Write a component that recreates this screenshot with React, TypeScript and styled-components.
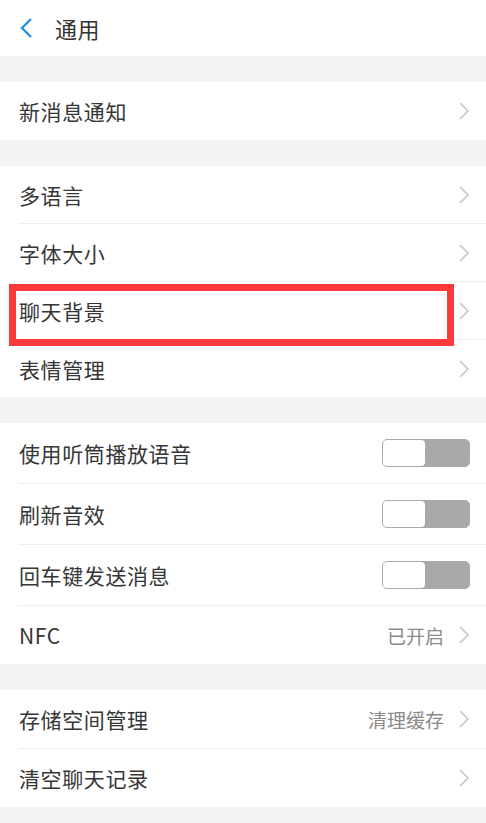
import { FC } from "react";
import styled, { createGlobalStyle } from "styled-components";

const GlobalStyle = createGlobalStyle`
  html, body {
    margin: 0;
    padding: 0;
    background: #f3f3f3;
  }
  body {
    font-family: "Noto Sans CJK SC", "Noto Sans", sans-serif;
    color: #333;
  }
`;

const Page = styled.div`
  width: 486px;
  height: 823px;
  overflow: hidden;
  background: #f3f3f3;
  display: flex;
  flex-direction: column;
`;

const Header = styled.div`
  height: 56px;
  background: #fff;
  display: flex;
  align-items: center;
  padding-left: 19px;
  gap: 20px;
`;

const Title = styled.div`
  font-size: 22px;
  color: #333;
  letter-spacing: 0.5px;
`;

const Group = styled.div`
  background: #fff;
  margin-top: 26px;
`;

const Row = styled.div<{ $h: number; $last?: boolean }>`
  position: relative;
  height: ${(p) => p.$h}px;
  display: flex;
  align-items: center;
  padding: 0 16px 0 19px;
  border-bottom: ${(p) => (p.$last ? "none" : "1px solid transparent")};
  &:after {
    content: "";
    display: ${(p) => (p.$last ? "none" : "block")};
    position: absolute;
    left: 18px;
    right: 0;
    bottom: -1px;
    height: 1px;
    background: #ededed;
  }
`;

const Label = styled.div`
  flex: 1;
  font-size: 21px;
  color: #363636;
  letter-spacing: 0.6px;
`;

const Value = styled.div`
  font-size: 19px;
  color: #8a8a8a;
  margin-right: 14px;
`;

const Toggle = styled.div`
  width: 86px;
  height: 26px;
  border: 1px solid #a9a9a7;
  border-radius: 5px;
  background: #a9aaa8;
  display: flex;
`;

const Knob = styled.div`
  width: 42px;
  height: 26px;
  border-radius: 4px;
  background: #fff;
`;

const Highlight = styled.div`
  position: absolute;
  left: 9px;
  top: 2px;
  width: 445px;
  height: 62px;
  box-sizing: border-box;
  border: 7px solid #fc3a3b;
  z-index: 2;
  pointer-events: none;
`;

const Chevron: FC = () => (
  <svg width="12" height="20" viewBox="0 0 12 20">
    <path d="M2 2 L10 10 L2 18" fill="none" stroke="#c6c6c6" strokeWidth="1.6" />
  </svg>
);

const BackIcon: FC = () => (
  <svg width="16" height="22" viewBox="0 0 16 22">
    <path d="M12 2 L3 11 L12 20" fill="none" stroke="#2a8fdb" strokeWidth="2.4" />
  </svg>
);

type Item = {
  label: string;
  value?: string;
  toggle?: boolean;
  highlight?: boolean;
  h?: number;
};

const groups: Item[][] = [
  [{ label: "新消息通知", h: 58 }],
  [
    { label: "多语言" },
    { label: "字体大小" },
    { label: "聊天背景", highlight: true },
    { label: "表情管理" },
  ],
  [
    { label: "使用听筒播放语音", toggle: true, h: 60 },
    { label: "刷新音效", toggle: true, h: 60 },
    { label: "回车键发送消息", toggle: true, h: 60 },
    { label: "NFC", value: "已开启", h: 58 },
  ],
  [
    { label: "存储空间管理", value: "清理缓存", h: 58 },
    { label: "清空聊天记录", h: 58 },
  ],
];

const App: FC = () => (
  <>
    <GlobalStyle />
    <Page>
      <Header>
        <BackIcon />
        <Title>通用</Title>
      </Header>
      {groups.map((items, gi) => (
        <Group key={gi}>
          {items.map((it, i) => (
            <Row key={it.label} $h={it.h ?? 57} $last={i === items.length - 1}>
              <Label>{it.label}</Label>
              {it.value && <Value>{it.value}</Value>}
              {it.toggle ? (
                <Toggle>
                  <Knob />
                </Toggle>
              ) : (
                <Chevron />
              )}
              {it.highlight && <Highlight />}
            </Row>
          ))}
        </Group>
      ))}
    </Page>
  </>
);

export default App;
